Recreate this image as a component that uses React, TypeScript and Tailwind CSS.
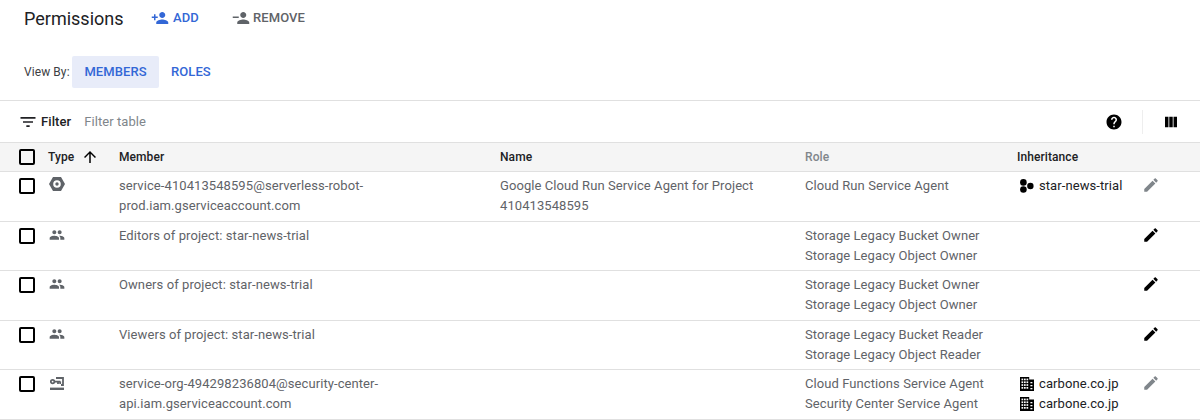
const PATHS = {
  add: "M15 12c2.21 0 4-1.79 4-4s-1.79-4-4-4-4 1.79-4 4 1.79 4 4 4zm-9-2V7H4v3H1v2h3v3h2v-3h3v-2H6zm9 4c-2.67 0-8 1.34-8 4v2h16v-2c0-2.66-5.33-4-8-4z",
  remove: "M15 12c2.21 0 4-1.79 4-4s-1.79-4-4-4-4 1.79-4 4 1.79 4 4 4zM1 10v2h8v-2H1zm14 4c-2.67 0-8 1.34-8 4v2h16v-2c0-2.66-5.33-4-8-4z",
  filter: "M10 18h4v-2h-4v2zM3 6v2h18V6H3zm3 7h12v-2H6v2z",
  help: "M12 2C6.48 2 2 6.48 2 12s4.48 10 10 10 10-4.48 10-10S17.52 2 12 2zm1 17h-2v-2h2v2zm2.07-7.75l-.9.92C13.45 12.9 13 13.5 13 15h-2v-.5c0-1.1.45-2.1 1.17-2.83l1.24-1.26c.37-.36.59-.86.59-1.41 0-1.1-.9-2-2-2s-2 .9-2 2H8c0-2.21 1.79-4 4-4s4 1.79 4 4c0 .88-.36 1.68-.93 2.25z",
  columns: "M4 5h4.6v14H4zM9.7 5h4.6v14H9.7zM15.4 5H20v14h-4.6z",
  arrow: "M4 12l1.41 1.41L11 7.83V20h2V7.83l5.58 5.59L20 12l-8-8-8 8z",
  edit: "M3 17.25V21h3.75L17.81 9.94l-3.75-3.75L3 17.25zM20.71 7.04c.39-.39.39-1.02 0-1.41l-2.34-2.34c-.39-.39-1.02-.39-1.41 0l-1.83 1.83 3.75 3.75 1.83-1.83z",
  group: "M16 11c1.66 0 2.99-1.34 2.99-3S17.66 5 16 5c-1.66 0-3 1.34-3 3s1.34 3 3 3zm-8 0c1.66 0 2.99-1.34 2.99-3S9.66 5 8 5C6.34 5 5 6.34 5 8s1.34 3 3 3zm0 2c-2.33 0-7 1.17-7 3.5V19h14v-2.5c0-2.33-4.67-3.5-7-3.5zm8 0c-.29 0-.62.02-.97.05 1.16.84 1.97 1.97 1.97 3.45V19h6v-2.5c0-2.33-4.67-3.5-7-3.5z",
};

function Icon({ d, className }: { d: string; className: string }) {
  return (
    <svg viewBox="0 0 24 24" fill="currentColor" className={className}>
      <path d={d} />
    </svg>
  );
}

function ServiceIcon() {
  return (
    <svg viewBox="0 0 16 14" fill="currentColor" className="w-4 h-[14px] ml-[1px] text-[#5f6368]">
      <path
        fillRule="evenodd"
        d="M4 0h8l4 7-4 7H4L0 7zM8 3.2a3.8 3.8 0 1 0 0 7.6 3.8 3.8 0 0 0 0-7.6z"
      />
      <circle cx="8" cy="7" r="1.7" />
    </svg>
  );
}

function ProjectIcon() {
  return (
    <svg viewBox="0 0 14 14" fill="currentColor" className="w-[14px] h-[14px] ml-[3px] text-black">
      <circle cx="3.4" cy="3.4" r="3.3" />
      <circle cx="3.4" cy="10.5" r="3.3" />
      <circle cx="10.4" cy="7" r="3.2" />
    </svg>
  );
}

function OrgIcon() {
  const windows = [1.5, 4, 6.5].flatMap((x) => [1.6, 4.4, 7.2, 10].map((y) => [x, y]));
  return (
    <svg viewBox="0 0 14 14" className="w-[14px] h-[14px] ml-[3px] text-black">
      <path d="M0 0h9.2v2.6H14V14H0z" fill="currentColor" />
      {windows.map(([x, y]) => (
        <rect key={`${x}-${y}`} x={x} y={y} width="1.7" height="1.7" fill="#fff" />
      ))}
      <rect x="10.4" y="5" width="2" height="1.3" fill="#fff" />
      <rect x="10.4" y="8" width="2" height="1.3" fill="#fff" />
      <rect x="10.4" y="11" width="2" height="1.3" fill="#fff" />
    </svg>
  );
}

function KeyIcon() {
  return (
    <svg viewBox="0 0 14 13" fill="none" stroke="currentColor" className="w-[14px] h-[13px] ml-[2px] mt-[2px] text-[#5f6368]">
      <circle cx="2.6" cy="4.6" r="1.8" strokeWidth="1.8" />
      <path d="M4.4 4.6h6M8 4.6v2.4M10.2 4.6v2.4M6 1h7v7h-2" strokeWidth="1.8" />
      <path d="M0 10.6h14V13H0z" fill="currentColor" strokeWidth="0" />
    </svg>
  );
}

function Checkbox() {
  return <div className="w-4 h-4 border-2 border-black rounded-[2px]" />;
}

const groupIcon = <Icon d={PATHS.group} className="w-4 h-4 ml-[1px] text-[#5f6368]" />;

const rows = [
  {
    icon: <ServiceIcon />,
    member: ["service-410413548595@serverless-robot-", "prod.iam.gserviceaccount.com"],
    name: ["Google Cloud Run Service Agent for Project", "410413548595"],
    roles: ["Cloud Run Service Agent"],
    inherit: [{ type: "project", label: "star-news-trial" }],
    editable: false,
  },
  {
    icon: groupIcon,
    member: ["Editors of project: star-news-trial"],
    name: [],
    roles: ["Storage Legacy Bucket Owner", "Storage Legacy Object Owner"],
    inherit: [],
    editable: true,
  },
  {
    icon: groupIcon,
    member: ["Owners of project: star-news-trial"],
    name: [],
    roles: ["Storage Legacy Bucket Owner", "Storage Legacy Object Owner"],
    inherit: [],
    editable: true,
  },
  {
    icon: groupIcon,
    member: ["Viewers of project: star-news-trial"],
    name: [],
    roles: ["Storage Legacy Bucket Reader", "Storage Legacy Object Reader"],
    inherit: [],
    editable: true,
  },
  {
    icon: <KeyIcon />,
    member: ["service-org-494298236804@security-center-", "api.iam.gserviceaccount.com"],
    name: [],
    roles: ["Cloud Functions Service Agent", "Security Center Service Agent"],
    inherit: [
      { type: "org", label: "carbone.co.jp" },
      { type: "org", label: "carbone.co.jp" },
    ],
    editable: false,
  },
];

const gridCols = "grid grid-cols-[48px_71px_381px_305px_212px_126px_57px]";

export default function App() {
  return (
    <div className="w-[1200px] h-[420px] overflow-hidden bg-white font-['Roboto',sans-serif] text-[13px] tracking-[0.08px] text-[#5f6368]">
      <div className="h-[36px] flex items-center pl-6">
        <h1 className="text-[18px] text-[#202124] w-[127px] tracking-normal">Permissions</h1>
        <button className="flex items-center gap-1 text-[#3367d6] font-medium text-[13px] w-[81px]">
          <Icon d={PATHS.add} className="w-[18px] h-[18px]" />
          ADD
        </button>
        <button className="flex items-center gap-[3px] text-[#5f6368] font-medium text-[13px]">
          <Icon d={PATHS.remove} className="w-[18px] h-[18px]" />
          REMOVE
        </button>
      </div>

      <div className="h-[65px] border-b border-[#e0e0e0] pl-6 pt-[20px] flex items-start">
        <span className="text-[12px] text-[#3c4043] h-8 leading-8 w-12 whitespace-nowrap">View By:</span>
        <button className="h-8 w-[87px] bg-[#e8ecf9] rounded-[2px] text-[#3367d6] font-medium">MEMBERS</button>
        <button className="h-8 ml-3 text-[#3367d6] font-medium">ROLES</button>
      </div>

      <div className="h-[41px] flex items-center pl-[17.5px]">
        <Icon d={PATHS.filter} className="w-5 h-5 text-[#202124]" />
        <span className="ml-[3.5px] font-medium text-[#202124]">Filter</span>
        <span className="ml-[13px] text-[#80868b]">Filter table</span>
        <div className="ml-auto flex items-center">
          <Icon d={PATHS.help} className="w-[18px] h-[18px] text-black" />
          <div className="w-px h-6 bg-[#eeeeee] ml-[19px]" />
          <Icon d={PATHS.columns} className="w-[18px] h-[18px] text-black ml-[19px] mr-[20px]" />
        </div>
      </div>

      <div className={`${gridCols} h-[30px] bg-[#f5f5f5] border-y border-[#e0e0e0] items-center text-[12px] font-medium text-[#202124]`}>
        <div className="pl-[19px]"><Checkbox /></div>
        <div className="flex items-center gap-[7px]">
          Type
          <Icon d={PATHS.arrow} className="w-[18px] h-[18px] text-black" />
        </div>
        <div>Member</div>
        <div>Name</div>
        <div className="text-[#80868b]">Role</div>
        <div className="col-span-2">Inheritance</div>
      </div>

      {rows.map((row, i) => (
        <div key={i} className={`${gridCols} h-[49.5px] border-b border-[#e0e0e0] pt-[4px] leading-5`}>
          <div className="pl-[19px] pt-[2px]"><Checkbox /></div>
          <div className="pt-[1px]">{row.icon}</div>
          <div>{row.member.map((t) => <div key={t}>{t}</div>)}</div>
          <div>{row.name.map((t) => <div key={t}>{t}</div>)}</div>
          <div>{row.roles.map((t) => <div key={t}>{t}</div>)}</div>
          <div>
            {row.inherit.map((item, j) => (
              <div key={j} className="flex items-center gap-[5px] h-5 text-[#202124]">
                {item.type === "project" ? <ProjectIcon /> : <OrgIcon />}
                <span>{item.label}</span>
              </div>
            ))}
          </div>
          <div>
            <Icon d={PATHS.edit} className={`w-[18px] h-[18px] -ml-px ${row.editable ? "text-black" : "text-[#80868b]"}`} />
          </div>
        </div>
      ))}
    </div>
  );
}
